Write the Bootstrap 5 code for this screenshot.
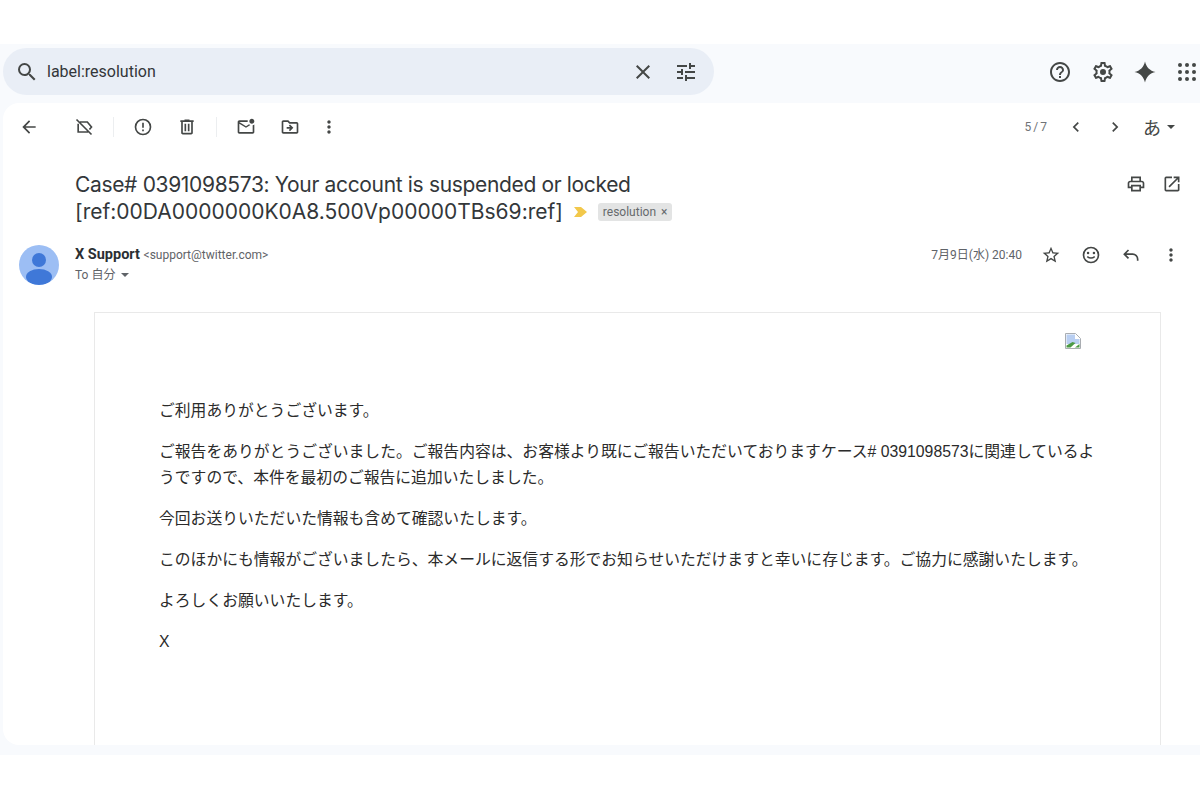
<!DOCTYPE html>
<html lang="ja">
<head>
    <meta charset="UTF-8">
    <meta name="viewport" content="width=device-width, initial-scale=1.0">
    <link href="https://cdn.jsdelivr.net/npm/bootstrap@5.3.3/dist/css/bootstrap.min.css" rel="stylesheet" crossorigin="anonymous">
    <title>Case# 0391098573</title>
    <style>
        html, body {
            height: 800px;
            overflow: hidden;
        }

        body {
            background-color: #fff;
            color: #2b2f33;
            font-family: Roboto, "Noto Sans CJK JP", sans-serif;
        }

        svg {
            display: block;
            fill: #444746;
            flex-shrink: 0;
        }

        .mail-shell {
            margin-top: 44px;
            height: 711px;
            background-color: #f8fafd;
            padding-left: 3px;
        }

        .top-bar {
            height: 59px;
            padding-top: 4px;
        }

        .search-box {
            width: 711px;
            height: 47px;
            background-color: #e9eef6;
            border-radius: 24px;
            padding: 0 16px 0 12px;
            font-size: 16px;
        }

        .search-text {
            margin-left: 8px;
            color: #33363a;
        }

        .top-icons {
            gap: 19px;
            padding-right: 3px;
            width: 150px;
            height: 47px;
        }

        .mail-panel {
            height: 642px;
            background-color: #fff;
            border-radius: 16px 0 0 16px;
            overflow: hidden;
        }

        .tool-row {
            height: 48px;
            padding: 0 25px 0 16px;
        }

        .tool-sep {
            width: 1px;
            height: 20px;
            background-color: #eceef0;
        }

        .page-count {
            font-size: 12px;
            color: #6f7377;
            word-spacing: -1px;
        }

        .lang-glyph {
            font-size: 18px;
            color: #444746;
            font-family: "Noto Sans CJK JP", sans-serif;
        }

        .caret-down {
            width: 0;
            height: 0;
            border-left: 4px solid transparent;
            border-right: 4px solid transparent;
            border-top: 4px solid #444746;
        }

        .subject-row {
            height: 74px;
            padding: 20px 18px 0 72px;
        }

        .subject-text {
            font-family: Inter, Roboto, sans-serif;
            font-size: 21px;
            line-height: 27px;
            color: #33373a;
        }

        .subject-first {
            letter-spacing: -.34px;
        }

        .subject-icons {
            padding-top: 3px;
        }

        .label-arrow {
            display: inline-block;
            margin: 0 7px 0 5px;
            vertical-align: 1px;
            fill: #f2c84b;
        }

        .label-chip {
            display: inline-block;
            font-family: Roboto, sans-serif;
            background-color: #e3e4e4;
            border-radius: 3px;
            padding: 0 5px;
            font-size: 12px;
            line-height: 18px;
            color: #666a6d;
            vertical-align: 3px;
            margin-left: 3px;
        }

        .label-chip span {
            margin-left: 2px;
        }

        .sender-row {
            height: 87px;
            padding: 19px 19px 0 16px;
        }

        .avatar-pic {
            width: 40px;
            height: 40px;
            margin-top: 1px;
            margin-right: 16px;
        }

        .sender-info {
            margin-top: 1px;
        }

        .sender-name {
            font-size: 14.5px;
            font-weight: 700;
            line-height: 20px;
        }

        .sender-mail {
            font-size: 12px;
            font-weight: 400;
            color: #5f6368;
        }

        .to-line {
            font-size: 12px;
            line-height: 20px;
            color: #5f6368;
        }

        .to-line .caret-down {
            margin-left: 6px;
            border-top-color: #5f6368;
        }

        .mail-date {
            font-size: 12px;
            color: #5f6368;
            margin-top: 1px;
            margin-right: 19px;
            line-height: 20px;
        }

        .sender-tools {
            gap: 20px;
            margin-top: 1px;
        }

        .body-frame {
            margin-left: 91px;
            width: 1067px;
            height: 450px;
            border: 1px solid #e9e9e9;
            padding: 20px 64px 0 64px;
        }

        .broken-pic {
            margin-left: auto;
            margin-right: 15px;
        }

        .body-copy {
            margin-top: 49px;
            font-family: "Liberation Sans", "Noto Sans CJK JP", sans-serif;
            font-size: 15.8px;
            line-height: 26px;
            color: #2b2b2b;
        }

        .body-copy p {
            margin-bottom: 15px;
        }
    </style>
</head>
<body>

<div class="mail-shell d-flex flex-column">
    <!-- Search bar -->
    <div class="top-bar d-flex justify-content-between align-items-start">
        <div class="search-box d-flex align-items-center">
            <svg width="24" height="24" viewBox="0 0 24 24"><path d="M15.5 14h-.79l-.28-.27A6.471 6.471 0 0 0 16 9.5 6.5 6.5 0 1 0 9.5 16c1.61 0 3.09-.59 4.23-1.57l.27.28v.79l5 4.99L20.49 19l-4.99-5zm-6 0C7.01 14 5 11.99 5 9.5S7.01 5 9.5 5 14 7.01 14 9.5 11.99 14 9.5 14z"/></svg>
            <span class="search-text flex-grow-1">label:resolution</span>
            <svg style="margin-right:19px" width="24" height="24" viewBox="0 0 24 24"><path d="M19 6.41 17.59 5 12 10.59 6.41 5 5 6.41 10.59 12 5 17.59 6.41 19 12 13.41 17.59 19 19 17.59 13.41 12z"/></svg>
            <svg width="24" height="24" viewBox="0 0 24 24"><path d="M3 17v2h6v-2H3zM3 5v2h10V5H3zm10 16v-2h8v-2h-8v-2h-2v6h2zM7 9v2H3v2h4v2h2V9H7zm14 4v-2H11v2h10zm-6-4h2V7h4V5h-4V3h-2v6z"/></svg>
        </div>
        <div class="top-icons d-flex align-items-center justify-content-end">
            <svg width="24" height="24" viewBox="0 0 24 24"><path d="M11 18h2v-2h-2v2zm1-16C6.48 2 2 6.48 2 12s4.48 10 10 10 10-4.48 10-10S17.52 2 12 2zm0 18c-4.41 0-8-3.59-8-8s3.59-8 8-8 8 3.59 8 8-3.59 8-8 8zm0-14c-2.21 0-4 1.79-4 4h2c0-1.1.9-2 2-2s2 .9 2 2c0 2-3 1.75-3 5h2c0-2.25 3-2.5 3-5 0-2.21-1.79-4-4-4z"/></svg>
            <svg width="24" height="24" viewBox="0 0 24 24"><path d="M19.43 12.98c.04-.32.07-.64.07-.98 0-.34-.03-.66-.07-.98l2.11-1.65c.19-.15.24-.42.12-.64l-2-3.46c-.09-.16-.26-.25-.44-.25-.06 0-.12.01-.17.03l-2.49 1c-.52-.4-1.08-.73-1.69-.98l-.38-2.65C14.46 2.18 14.25 2 14 2h-4c-.25 0-.46.18-.49.42l-.38 2.65c-.61.25-1.17.59-1.69.98l-2.49-1c-.06-.02-.12-.03-.18-.03-.17 0-.34.09-.43.25l-2 3.46c-.13.22-.07.49.12.64l2.11 1.65c-.04.32-.07.65-.07.98 0 .33.03.66.07.98l-2.11 1.65c-.19.15-.24.42-.12.64l2 3.46c.09.16.26.25.44.25.06 0 .12-.01.17-.03l2.49-1c.52.4 1.08.73 1.69.98l.38 2.65c.03.24.24.42.49.42h4c.25 0 .46-.18.49-.42l.38-2.65c.61-.25 1.17-.59 1.69-.98l2.49 1c.06.02.12.03.18.03.17 0 .34-.09.43-.25l2-3.46c.12-.22.07-.49-.12-.64l-2.11-1.65zm-1.98-1.71c.04.31.05.52.05.73 0 .21-.02.43-.05.73l-.14 1.13.89.7 1.08.84-.7 1.21-1.27-.51-1.04-.42-.9.68c-.43.32-.84.56-1.25.73l-1.06.43-.16 1.13-.2 1.35h-1.4l-.19-1.35-.16-1.13-1.06-.43c-.43-.18-.83-.41-1.23-.71l-.91-.7-1.06.43-1.27.51-.7-1.21 1.08-.84.89-.7-.14-1.13c-.03-.31-.05-.54-.05-.74s.02-.43.05-.73l.14-1.13-.89-.7-1.08-.84.7-1.21 1.27.51 1.04.42.9-.68c.43-.32.84-.56 1.25-.73l1.06-.43.16-1.13.2-1.35h1.39l.19 1.35.16 1.13 1.06.43c.43.18.83.41 1.23.71l.91.7 1.06-.43 1.27-.51.7 1.21-1.07.85-.89.7.14 1.13zM12 9a3 3 0 1 0 0 6 3 3 0 0 0 0-6z"/></svg>
            <svg style="margin-left:-1px;margin-right:1px" width="24" height="24" viewBox="0 0 24 24"><path d="M12 1.5c1.2 5.600 4.900 9.300 10.500 10.500-5.600 1.200-9.300 4.900-10.500 10.500-1.200-5.600-4.900-9.300-10.500-10.500 5.600-1.200 9.300-4.900 10.500-10.500z"/></svg>
            <svg width="20" height="20" viewBox="0 0 20 20"><circle cx="3" cy="3" r="2"/><circle cx="10" cy="3" r="2"/><circle cx="17" cy="3" r="2"/><circle cx="3" cy="10" r="2"/><circle cx="10" cy="10" r="2"/><circle cx="17" cy="10" r="2"/><circle cx="3" cy="17" r="2"/><circle cx="10" cy="17" r="2"/><circle cx="17" cy="17" r="2"/></svg>
        </div>
    </div>

    <div class="mail-panel">
        <!-- Toolbar -->
        <div class="tool-row d-flex align-items-center">
            <svg width="20" height="20" viewBox="0 0 24 24"><path d="M20 11H7.830l5.590-5.590L12 4l-8 8 8 8 1.410-1.410L7.830 13H20v-2z"/></svg>
            <svg style="margin-left:35px" width="20" height="20" viewBox="0 0 24 24"><path d="M3 3 21 21M7 6h9l5 6-2.500 3M17 18H5V8" fill="none" stroke="#444746" stroke-width="2"/></svg>
            <div class="tool-sep" style="margin:0 19px 0 19px"></div>
            <svg width="20" height="20" viewBox="0 0 24 24"><circle cx="12" cy="12" r="9" fill="none" stroke="#444746" stroke-width="2"/><path d="M11 7h2v6h-2zM11 15h2v2h-2z"/></svg>
            <svg style="margin-left:24px" width="20" height="20" viewBox="0 0 24 24"><path d="M15 4V3H9v1H4v2h1v13c0 1.100.9 2 2 2h10c1.100 0 2-.9 2-2V6h1V4h-5zm2 15H7V6h10v13zM9 8h2v9H9zm4 0h2v9h-2z"/></svg>
            <div class="tool-sep" style="margin:0 19px 0 19px"></div>
            <svg width="20" height="20" viewBox="0 0 24 24"><path d="M22 8.980V18c0 1.100-.9 2-2 2H4c-1.100 0-2-.9-2-2V6c0-1.100.9-2 2-2h10.100c-.06.32-.1.66-.1 1 0 .34.04.68.1 1H4l8 5 3.670-2.290c.47.43 1.020.76 1.630.98L12 13 4 8v10h16V9.900c.74-.15 1.420-.48 2-.92zM16 5c0 1.660 1.340 3 3 3s3-1.340 3-3-1.340-3-3-3-3 1.340-3 3z"/></svg>
            <svg style="margin-left:24px" width="20" height="20" viewBox="0 0 24 24"><path d="M20 6h-8l-2-2H4c-1.100 0-1.990.9-1.990 2L2 18c0 1.100.9 2 2 2h16c1.100 0 2-.9 2-2V8c0-1.100-.9-2-2-2zm0 12H4V6h5.170l2 2H20v10zm-8.010-9l-1.410 1.410L12.160 12H8v2h4.160l-1.590 1.590L11.990 17 16 13.010 11.990 9z"/></svg>
            <svg style="margin-left:19px" width="20" height="20" viewBox="0 0 24 24"><path d="M12 8c1.100 0 2-.9 2-2s-.9-2-2-2-2 .9-2 2 .9 2 2 2zm0 2c-1.100 0-2 .9-2 2s.9 2 2 2 2-.9 2-2-.9-2-2-2zm0 6c-1.100 0-2 .9-2 2s.9 2 2 2 2-.9 2-2-.9-2-2-2z"/></svg>
            <span class="page-count ms-auto">5 / 7</span>
            <svg style="margin-left:19px" width="20" height="20" viewBox="0 0 24 24"><path d="M15.410 7.410 14 6l-6 6 6 6 1.410-1.410L10.830 12z"/></svg>
            <svg style="margin-left:19px" width="20" height="20" viewBox="0 0 24 24"><path d="M10 6 8.590 7.410 13.170 12l-4.580 4.590L10 18l6-6z"/></svg>
            <span class="lang-glyph" style="margin-left:18px">あ</span>
            <span class="caret-down" style="margin-left:6px"></span>
        </div>

        <!-- Subject -->
        <div class="subject-row d-flex justify-content-between">
            <div class="subject-text">
                <span class="subject-first">Case# 0391098573: Your account is suspended or locked</span><br>
                [ref:00DA0000000K0A8.500Vp00000TBs69:ref]
                <svg class="label-arrow d-inline-block" width="14" height="12" viewBox="0 0 14 12"><path d="M0 1h7l6 5-6 5H0l4-5z"/></svg><span class="label-chip">resolution <span>×</span></span>
            </div>
            <div class="subject-icons d-flex gap-3">
                <svg width="20" height="20" viewBox="0 0 24 24"><path d="M19 8h-1V3H6v5H5c-1.660 0-3 1.340-3 3v6h4v4h12v-4h4v-6c0-1.660-1.340-3-3-3zM8 5h8v3H8V5zm8 12v2H8v-4h8v2zm2-2v-2H6v2H4v-4c0-.55.45-1 1-1h14c.55 0 1 .45 1 1v4h-2z"/></svg>
                <svg width="20" height="20" viewBox="0 0 24 24"><path d="M19 19H5V5h7V3H5a2 2 0 0 0-2 2v14a2 2 0 0 0 2 2h14c1.100 0 2-.9 2-2v-7h-2v7zM14 3v2h3.590l-9.830 9.830 1.410 1.410L19 6.410V10h2V3h-7z"/></svg>
            </div>
        </div>

        <!-- Sender -->
        <div class="sender-row d-flex align-items-start">
            <svg class="avatar-pic" viewBox="0 0 40 40"><defs><clipPath id="avatarClip"><circle cx="20" cy="20" r="20"/></clipPath></defs><circle cx="20" cy="20" r="20" fill="#9cbef4"/><g clip-path="url(#avatarClip)"><circle cx="20" cy="15" r="7" fill="#3f78d8"/><ellipse cx="20" cy="32" rx="13" ry="8" fill="#3f78d8"/></g></svg>
            <div class="sender-info flex-grow-1">
                <div class="sender-name">X Support <span class="sender-mail">&lt;support@twitter.com&gt;</span></div>
                <div class="to-line d-flex align-items-center">To 自分<span class="caret-down"></span></div>
            </div>
            <span class="mail-date">7月9日(水) 20:40</span>
            <div class="sender-tools d-flex">
                <svg width="20" height="20" viewBox="0 0 24 24"><path d="M22 9.240l-7.190-.62L12 2 9.190 8.630 2 9.240l5.460 4.730L5.820 21 12 17.270 18.180 21l-1.630-7.030L22 9.240zM12 15.400l-3.760 2.270 1-4.280-3.320-2.880 4.380-.38L12 6.100l1.710 4.040 4.380.38-3.320 2.880 1 4.280L12 15.400z"/></svg>
                <svg width="20" height="20" viewBox="0 0 24 24"><circle cx="12" cy="12" r="9" fill="none" stroke="#444746" stroke-width="2"/><circle cx="8.500" cy="9.500" r="1.500"/><circle cx="15.500" cy="9.500" r="1.500"/><path d="M7.500 14c2.500 1.800 6.500 1.800 9 0" fill="none" stroke="#444746" stroke-width="2"/></svg>
                <svg width="20" height="20" viewBox="0 0 24 24"><path d="M9 6 4 11l5 5M4 11h10a6 6 0 0 1 6 6v2" fill="none" stroke="#444746" stroke-width="2"/></svg>
                <svg width="20" height="20" viewBox="0 0 24 24"><path d="M12 8c1.100 0 2-.9 2-2s-.9-2-2-2-2 .9-2 2 .9 2 2 2zm0 2c-1.100 0-2 .9-2 2s.9 2 2 2 2-.9 2-2-.9-2-2-2zm0 6c-1.100 0-2 .9-2 2s.9 2 2 2 2-.9 2-2-.9-2-2-2z"/></svg>
            </div>
        </div>

        <!-- Message body -->
        <div class="body-frame">
            <svg class="broken-pic" width="16" height="16" viewBox="0 0 16 16"><path d="M.5.5h10l5 5v10H.5z" fill="#fff" stroke="#a9adb2"/><path d="M1.500 1.500h8.500v4.500h4.500v5H1.500z" fill="#b9cff2"/><path d="M1.500 14.500v-2l6-3.500 3 1-5 4.500z" fill="#4c9a45"/><path d="M10 14.500l4.500-3.500v3.500z" fill="#4c9a45"/></svg>
            <div class="body-copy">
                <p>ご利用ありがとうございます。</p>
                <p>ご報告をありがとうございました。ご報告内容は、お客様より既にご報告いただいておりますケース# 0391098573に関連しているようですので、本件を最初のご報告に追加いたしました。</p>
                <p>今回お送りいただいた情報も含めて確認いたします。</p>
                <p>このほかにも情報がございましたら、本メールに返信する形でお知らせいただけますと幸いに存じます。ご協力に感謝いたします。</p>
                <p>よろしくお願いいたします。</p>
                <p>X</p>
            </div>
        </div>
    </div>
</div>

<script src="https://cdn.jsdelivr.net/npm/bootstrap@5.3.3/dist/js/bootstrap.bundle.min.js" crossorigin="anonymous"></script>
</body>
</html>
